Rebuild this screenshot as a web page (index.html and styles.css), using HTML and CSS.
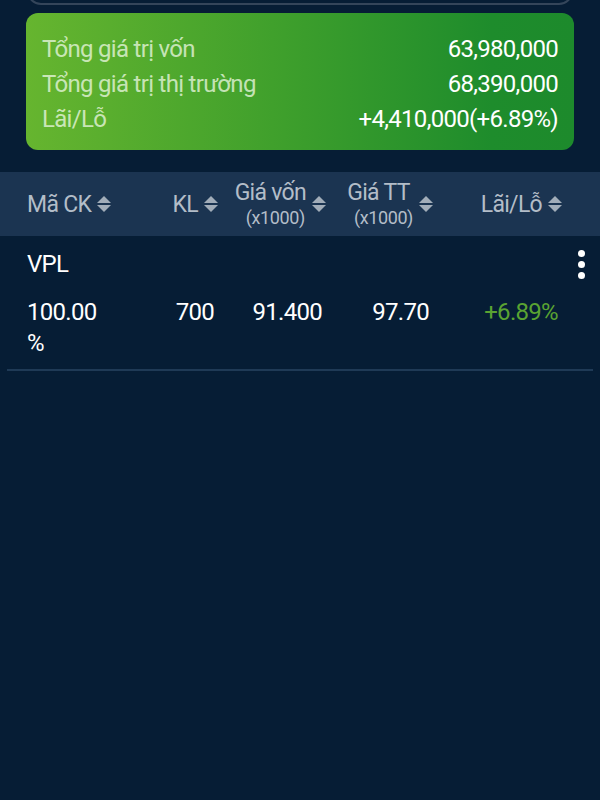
FILE: index.html
```html
<!DOCTYPE html>
<html lang="vi">
<head>
<meta charset="utf-8">
<link rel="stylesheet" href="styles.css">
</head>
<body>
<div class="top-card"></div>
<div class="summary">
  <div class="sum-row"><span class="lbl">Tổng giá trị vốn</span><span class="val">63,980,000</span></div>
  <div class="sum-row"><span class="lbl">Tổng giá trị thị trường</span><span class="val">68,390,000</span></div>
  <div class="sum-row"><span class="lbl">Lãi/Lỗ</span><span class="val">+4,410,000(+6.89%)</span></div>
</div>

<div class="thead">
  <div class="th th-left"><span>Mã CK</span><i class="sort"></i></div>
  <div class="th"><span>KL</span><i class="sort"></i></div>
  <div class="th"><span class="stack">Giá vốn<small>(x1000)</small></span><i class="sort"></i></div>
  <div class="th"><span class="stack">Giá TT<small>(x1000)</small></span><i class="sort"></i></div>
  <div class="th"><span>Lãi/Lỗ</span><i class="sort"></i></div>
</div>

<div class="item">
  <div class="item-head">
    <span class="code">VPL</span>
    <span class="more"><b></b><b></b><b></b></span>
  </div>
  <div class="item-row">
    <div class="td td-left">100.00 %</div>
    <div class="td">700</div>
    <div class="td">91.400</div>
    <div class="td">97.70</div>
    <div class="td up">+6.89%</div>
  </div>
</div>
</body>
</html>
```

FILE: styles.css
```css
* { box-sizing: border-box; }
html, body { margin: 0; padding: 0; }
body {
  width: 600px;
  height: 800px;
  background: #061d35;
  font-family: Roboto, "Noto Sans", sans-serif;
  color: #ffffff;
  overflow: hidden;
  letter-spacing: -0.7px;
}
.top-card {
  margin: -20px 27px 0 27px;
  height: 25px;
  border: 2px solid #34455a;
  border-top: none;
  border-radius: 0 0 14px 14px;
}
.summary {
  margin: 8px 26px 0 26px;
  height: 137px;
  border-radius: 12px;
  background: linear-gradient(90deg, #66b52f 0%, #40a02c 45%, #1e8c2c 85%, #1d8a2c 100%);
  padding: 19px 16px 0 16px;
  display: flex;
  flex-direction: column;
}
.sum-row {
  display: flex;
  justify-content: space-between;
  height: 35px;
  line-height: 35px;
  font-size: 24px;
}
.lbl { color: rgba(230, 245, 220, 0.8); }
.val { color: #ffffff; }

.thead {
  margin-top: 22px;
  height: 64px;
  background: #1b3451;
  display: grid;
  grid-template-columns: 80px 1fr 108px 107px 129px;
  padding: 0 38px 0 27px;
  align-items: center;
  color: #b3bdc8;
  font-size: 23px;
}
.th {
  display: flex;
  align-items: center;
  justify-content: flex-end;
}
.th-left { justify-content: flex-start; white-space: nowrap; }
.stack {
  display: flex;
  flex-direction: column;
  align-items: center;
  line-height: 27px;
}
.stack small {
  font-size: 18px;
  line-height: 24px;
  margin-left: 10px;
  letter-spacing: -0.4px;
}
.sort {
  display: inline-flex;
  flex-direction: column;
  width: 14px;
  margin-left: 6px;
  gap: 2px;
}
.sort::before, .sort::after {
  content: "";
  width: 0; height: 0;
  border-left: 7px solid transparent;
  border-right: 7px solid transparent;
}
.sort::before { border-bottom: 7px solid #a2adb9; }
.sort::after { border-top: 7px solid #a2adb9; }

.item {
  margin: 0 7px;
  border-bottom: 2px solid #1f3a56;
  padding-bottom: 10px;
}
.item-head {
  display: flex;
  justify-content: space-between;
  align-items: center;
  height: 56px;
  padding: 0 8px 0 20px;
  font-size: 24px;
}
.more {
  display: flex;
  flex-direction: column;
  gap: 4px;
}
.more b {
  display: block;
  width: 7px; height: 7px;
  border-radius: 50%;
  background: #ffffff;
}
.item-row {
  display: grid;
  grid-template-columns: 80px 1fr 108px 107px 129px;
  padding: 5px 31px 0 20px;
  font-size: 24px;
  line-height: 31px;
}
.td { text-align: right; padding-right: 4px; }
.td-left { text-align: left; }
.up { color: #5aa332; }
```
